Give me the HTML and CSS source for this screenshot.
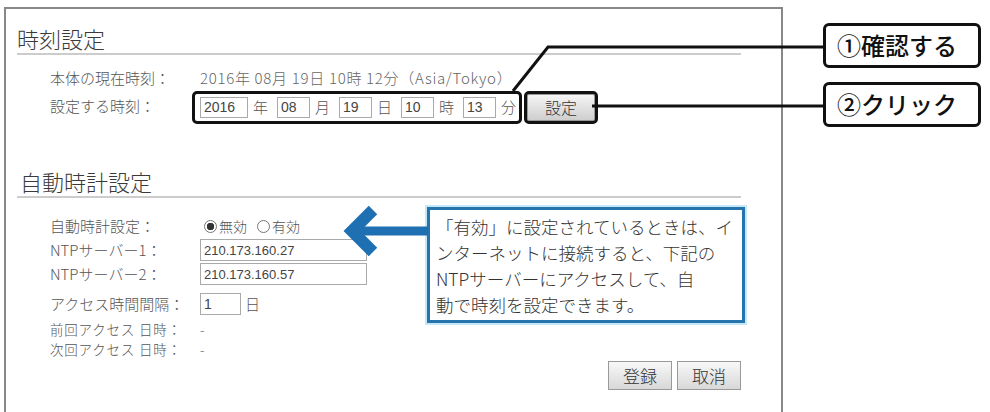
FILE: index.html
```html
<!DOCTYPE html>
<html lang="ja">
<head>
  <meta charset="UTF-8" />
  <meta name="viewport" content="width=device-width, initial-scale=1.0" />
  <title>時刻設定</title>
  <link rel="stylesheet" href="styles.css">
</head>

<body>
  <div class="stage">
    <div class="panel">
      <div class="inner">
        <h2 class="heading">時刻設定</h2>

        <div class="row first">
          <span class="label">本体の現在時刻：</span>
          <span class="value">2016年 08月 19日 10時 12分（Asia/Tokyo）</span>
        </div>

        <div class="row">
          <span class="label">設定する時刻：</span>
          <span class="time-group">
            <input class="field w-year" type="text" value="2016"><span class="unit">年</span>
            <input class="field w-num" type="text" value="08"><span class="unit">月</span>
            <input class="field w-num" type="text" value="19"><span class="unit">日</span>
            <input class="field w-num" type="text" value="10"><span class="unit">時</span>
            <input class="field w-num" type="text" value="13"><span class="unit">分</span>
          </span>
          <button class="set-btn">設定</button>
        </div>

        <h2 class="heading second">自動時計設定</h2>

        <div class="row radio-row">
          <span class="label">自動時計設定：</span>
          <span class="radio on"></span><span class="radio-text">無効</span>
          <span class="radio"></span><span class="radio-text">有効</span>
        </div>
        <div class="row field-row">
          <span class="label">NTPサーバー1：</span>
          <input class="field w-ip" type="text" value="210.173.160.27">
        </div>
        <div class="row field-row">
          <span class="label">NTPサーバー2：</span>
          <input class="field w-ip" type="text" value="210.173.160.57">
        </div>
        <div class="row field-row interval">
          <span class="label">アクセス時間間隔：</span>
          <input class="field w-day" type="text" value="1"><span class="unit">日</span>
        </div>
        <div class="row small first-small">
          <span class="label">前回アクセス 日時：</span>
          <span class="value">-</span>
        </div>
        <div class="row small">
          <span class="label">次回アクセス 日時：</span>
          <span class="value">-</span>
        </div>

        <div class="actions">
          <button class="btn">登録</button>
          <button class="btn">取消</button>
        </div>
      </div>
    </div>

    <div class="notes">
      <div class="note">①確認する</div>
      <div class="note">②クリック</div>
    </div>

    <div class="callout">
      「有効」に設定されているときは、イ<br>
      ンターネットに接続すると、下記の<br>
      NTPサーバーにアクセスして、自<br>
      動で時刻を設定できます。
    </div>

    <svg class="overlay" width="990" height="412" viewBox="0 0 990 412">
      <polyline points="513,91 548,47 823,47" fill="none" stroke="#111" stroke-width="3" />
      <line x1="592" y1="106" x2="823" y2="106" stroke="#111" stroke-width="3" />
      <line x1="360" y1="231" x2="428" y2="231" stroke="#1f6fb3" stroke-width="9" />
      <polyline points="373,210 352,231 373,252" fill="none" stroke="#1f6fb3" stroke-width="12" stroke-linejoin="miter" />
    </svg>
  </div>
</body>
</html>
```

FILE: styles.css
```css
* {
  box-sizing: border-box;
}

body {
  margin: 0;
  background: #fff;
  color: #555;
  font-family: "Noto Sans CJK JP", "Liberation Sans", sans-serif;
  font-weight: 300;
}

.stage {
  position: relative;
  width: 990px;
  height: 412px;
  overflow: hidden;
  display: flex;
  align-items: flex-start;
  padding: 7px 0 0 4px;
}

.panel {
  width: 779px;
  height: 410px;
  border: 2px solid #888;
  border-bottom: none;
}

.inner {
  width: 724px;
  margin-left: 11px;
}

.heading {
  margin: 15px 0 0;
  font-size: 22px;
  font-weight: 300;
  line-height: 29px;
  color: #3a3a3a;
  border-bottom: 2px solid #ccc;
}

.heading.second {
  margin-top: 44px;
  text-indent: 3px;
}

.row {
  display: flex;
  align-items: center;
  height: 22px;
  padding-left: 33px;
  font-size: 15px;
  line-height: 20px;
}

.row.first {
  margin-top: 12px;
}

.label {
  width: 150px;
  flex-shrink: 0;
  white-space: nowrap;
}

.value {
  color: #666;
  letter-spacing: 0.7px;
  white-space: nowrap;
}

.time-group {
  display: flex;
  align-items: center;
  height: 33px;
  margin: 2px 0 0 -8px;
  padding: 3px 3px 3px 5px;
  border: 3px solid #111;
  border-radius: 5px;
}

.row:has(.time-group) {
  height: 34px;
}

.field {
  height: 21px;
  padding: 0 3px;
  border: 1px solid #aaa;
  font-family: "Liberation Sans", sans-serif;
  font-size: 14px;
  color: #444;
  background: #fff;
}

.w-year { width: 48px; }
.w-num { width: 33px; }
.w-ip { width: 167px; font-size: 13px; }
.w-day { width: 41px; }

.unit {
  margin: 0 9px 0 5px;
}

.time-group .unit:last-child {
  margin-right: 0;
}

.set-btn {
  width: 74px;
  height: 33px;
  margin: 2px 0 0 2px;
  border: 3px solid #111;
  border-radius: 5px;
  background: linear-gradient(#f6f6f6, #cdcdcd);
  box-shadow: inset 0 0 0 1px #999;
  font-family: "Noto Sans CJK JP", sans-serif;
  font-size: 16px;
  font-weight: 300;
  color: #333;
}

.radio-row {
  height: 24px;
  margin-top: 16px;
}

.radio {
  width: 13px;
  height: 13px;
  margin: 0 2px 0 4px;
  border: 1px solid #777;
  border-radius: 50%;
  background: #fff;
}

.radio.on {
  background: radial-gradient(circle, #333 0 3.5px, #fff 4px);
}

.radio-text {
  margin-right: 6px;
  font-size: 14px;
}

.field-row {
  height: 24px;
}

.field-row .field {
  height: 22px;
}

.interval {
  margin-top: 6px;
}

.interval .unit {
  margin-left: 4px;
}

.small {
  height: 20px;
  font-size: 13.5px;
  line-height: 20px;
}

.small .label {
  letter-spacing: 0.8px;
}

.first-small {
  margin-top: 3px;
}

.actions {
  display: flex;
  justify-content: flex-end;
  gap: 5px;
  margin-top: 2px;
}

.btn {
  width: 64px;
  height: 29px;
  border: 1px solid #999;
  background: linear-gradient(#f8f8f8, #d8d8d8);
  font-family: "Noto Sans CJK JP", sans-serif;
  font-size: 17px;
  font-weight: 300;
  color: #333;
}

.notes {
  display: flex;
  flex-direction: column;
  gap: 14px;
  margin-left: 40px;
  padding-top: 16px;
}

.note {
  width: 158px;
  height: 45px;
  padding-left: 11px;
  border: 3px solid #111;
  border-radius: 6px;
  font-size: 24px;
  font-weight: 500;
  line-height: 38px;
  color: #111;
  background: #fff;
}

.callout {
  position: absolute;
  left: 427px;
  top: 207px;
  width: 318px;
  height: 116px;
  padding: 4px 0 0 6px;
  border: 3px solid #2674ad;
  box-shadow: 0 0 0 2px #c4e8f6;
  background: #fff;
  font-size: 17.5px;
  line-height: 26px;
  color: #333;
  white-space: nowrap;
}

.overlay {
  position: absolute;
  left: 0;
  top: 0;
  pointer-events: none;
}
```
